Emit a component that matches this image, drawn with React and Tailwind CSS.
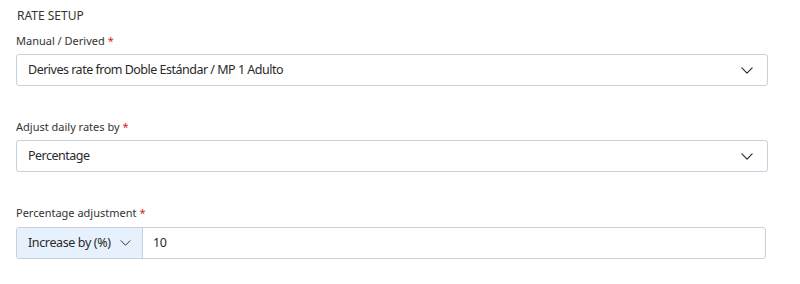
const Chevron = ({ className = '' }) => (
  <svg
    viewBox="0 0 14 8"
    className={className}
    fill="none"
    stroke="#2b2b2b"
    strokeWidth="1.3"
    strokeLinecap="round"
    strokeLinejoin="round"
  >
    <path d="M1 1l6 6 6-6" />
  </svg>
);

const Label = ({ children }) => (
  <div className="h-[16px] text-[11px] leading-[16px] text-[#333]">
    {children} <span className="text-[#e0201b]">*</span>
  </div>
);

const Select = ({ value }) => (
  <div className="flex h-[32px] items-center justify-between rounded-[3px] border border-[#c8d0dc] bg-white pl-[11px] pr-[14px] text-[12.5px] tracking-[-0.04em] text-[#2a2a2a]">
    <span>{value}</span>
    <Chevron className="h-[7px] w-[12px]" />
  </div>
);

export default function App() {
  return (
    <div
      className="h-[284px] w-[800px] bg-white"
      style={{ fontFamily: '"Noto Sans", "Open Sans", sans-serif' }}
    >
      <div className="flex w-[768px] flex-col pl-[16px] pt-[8px]">
        <div className="h-[16px] pl-px text-[12px] leading-[16px] text-[#333]">RATE SETUP</div>

        <div className="mt-[9px]">
          <Label>Manual / Derived</Label>
          <div className="mt-[5px]">
            <Select value="Derives rate from Doble Estándar / MP 1 Adulto" />
          </div>
        </div>

        <div className="mt-[33px]">
          <Label>Adjust daily rates by</Label>
          <div className="mt-[5px]">
            <Select value="Percentage" />
          </div>
        </div>

        <div className="mt-[33px] pr-[2px]">
          <Label>Percentage adjustment</Label>
          <div className="mt-[6px] flex h-[32px] rounded-[3px] border border-[#c8d0dc] text-[12.5px] tracking-[-0.03em] text-[#2a2a2a]">
            <div className="flex w-[126px] shrink-0 items-center gap-[9px] whitespace-nowrap rounded-l-[3px] border-r border-[#c8d0dc] bg-[#e6f1fd] pl-[11px]">
              <span>Increase by (%)</span>
              <Chevron className="h-[6px] w-[11px]" />
            </div>
            <div className="flex flex-1 items-center pl-[10px]">10</div>
          </div>
        </div>
      </div>
    </div>
  );
}
